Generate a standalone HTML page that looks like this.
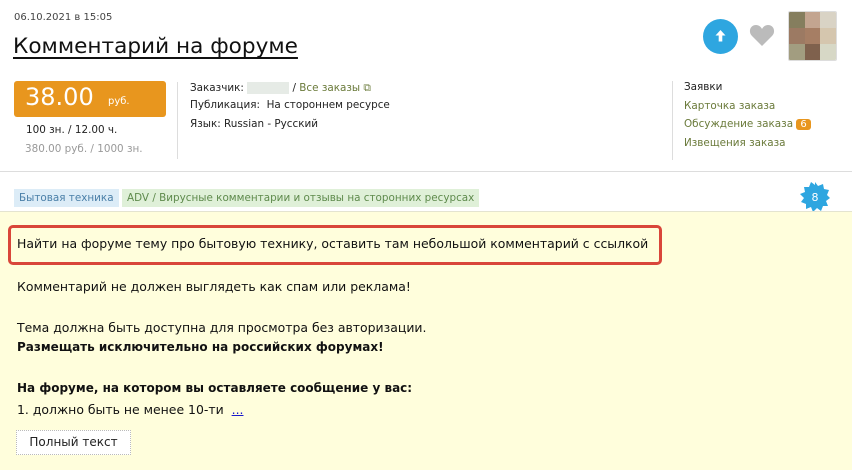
<!DOCTYPE html>
<html><head><meta charset="utf-8"><style>
*{margin:0;padding:0;box-sizing:border-box}
body{width:852px;height:470px;overflow:hidden;background:#fff;font-family:"DejaVu Sans","Liberation Sans",sans-serif;color:#222;position:relative}
.a{position:absolute;white-space:nowrap}
.s{font-size:10.4px}
.g{color:#6a7a3a}
.t{font-size:12.45px;color:#111}
</style></head><body>
<div class="a" style="left:14px;top:12px;color:#444;font-size:10px">06.10.2021 в 15:05</div>
<div class="a" style="left:13px;top:34px;font-size:21.6px;color:#111;text-decoration:underline;text-underline-offset:4px;text-decoration-thickness:2px">Комментарий на форуме</div>
<div class="a" style="left:14px;top:81px;width:152px;height:36px;background:#e8961e;border-radius:3px;color:#fff"><span style="position:absolute;left:11px;top:2px;font-size:24px">38.00</span><span style="position:absolute;left:94px;top:15px;font-size:10px">руб.</span></div>
<div class="a s" style="left:26px;top:124px">100 зн. / 12.00 ч.</div>
<div class="a s" style="left:25px;top:143px;color:#999">380.00 руб. / 1000 зн.</div>
<div class="a" style="left:177px;top:82px;width:1px;height:77px;background:#ddd"></div>
<div class="a s" style="left:190px;top:82px">Заказчик: <span style="display:inline-block;width:42px;height:12px;background:#e6ebe6;vertical-align:middle"></span> / <span class="g">Все заказы ⧉</span></div>
<div class="a s" style="left:190px;top:99px">Публикация:&nbsp; На стороннем ресурсе</div>
<div class="a s" style="left:190px;top:118px">Язык: Russian - Русский</div>
<div class="a" style="left:703px;top:19px;width:35px;height:35px;border-radius:50%;background:#2ea6e0"><svg width="35" height="35" viewBox="0 0 35 35"><path d="M17.5 11l-5 5.5h3.2v6h3.6v-6h3.2z" fill="#fff"/></svg></div>
<svg class="a" style="left:749px;top:23px" width="26" height="24" viewBox="0 0 26 24"><path d="M13 23L3 13C-1 9 1 2 7 2c3 0 5 2 6 4 1-2 3-4 6-4 6 0 8 7 4 11z" fill="#bbb"/></svg>
<div class="a" style="left:788px;top:11px;width:49px;height:50px;border:1px solid #ddd;display:grid;grid-template-columns:repeat(3,1fr);border-radius:2px;overflow:hidden">
<i style="background:#857e5e"></i><i style="background:#c3a590"></i><i style="background:#d9d3c5"></i>
<i style="background:#9c7a63"></i><i style="background:#a67e64"></i><i style="background:#d5c6ae"></i>
<i style="background:#a29d80"></i><i style="background:#7f614d"></i><i style="background:#d7d8c6"></i></div>
<div class="a" style="left:672px;top:81px;width:1px;height:79px;background:#ddd"></div>
<div class="a s" style="left:684px;top:81px">Заявки</div>
<div class="a s g" style="left:684px;top:100px">Карточка заказа</div>
<div class="a s g" style="left:684px;top:118px">Обсуждение заказа <span style="background:#e8961e;color:#fff;border-radius:3px;padding:0 4px;font-size:10px">6</span></div>
<div class="a s g" style="left:684px;top:137px">Извещения заказа</div>
<div class="a" style="left:0;top:171px;width:852px;height:1px;background:#ddd"></div>
<div class="a s" style="left:14px;top:189px;height:18px;line-height:18px;padding:0 5px;background:#dcecf7;color:#4a7fa8">Бытовая техника</div>
<div class="a s" style="left:122px;top:189px;height:18px;line-height:18px;padding:0 5px;background:#dff0d8;color:#5e8a4c">ADV / Вирусные комментарии и отзывы на сторонних ресурсах</div>
<svg class="a" style="left:799px;top:181px" width="32" height="32" viewBox="0 0 32 32"><polygon fill="#2ea6e0" points="16,1 19,5 24,3 25,8 30,9 28,14 31,17 27,20 29,25 24,25 22,30 18,27 14,31 12,26 7,28 7,23 2,21 5,17 1,13 6,11 5,6 10,6 12,1 16,4"/><text x="16" y="20" font-size="11" fill="#fff" text-anchor="middle" font-family="DejaVu Sans">8</text></svg>
<div class="a" style="left:0;top:211px;width:852px;height:259px;background:#fffedc;border-top:1px solid #e4e4d0"></div>
<div class="a" style="left:8px;top:225px;width:654px;height:40px;border:3px solid #d9463a;border-radius:5px"></div>
<div class="a t" style="left:17px;top:236px">Найти на форуме тему про бытовую технику, оставить там небольшой комментарий с ссылкой</div>
<div class="a t" style="left:17px;top:279px">Комментарий не должен выглядеть как спам или реклама!</div>
<div class="a t" style="left:17px;top:320px">Тема должна быть доступна для просмотра без авторизации.</div>
<div class="a t" style="left:17px;top:340px;font-weight:bold;font-size:12px">Размещать исключительно на российских форумах!</div>
<div class="a t" style="left:17px;top:381px;font-weight:bold;font-size:12px">На форуме, на котором вы оставляете сообщение у вас:</div>
<div class="a t" style="left:17px;top:402px">1. должно быть не менее 10-ти &nbsp;<span style="color:#1a1acc;text-decoration:underline">...</span></div>
<div class="a" style="left:16px;top:430px;width:115px;height:25px;border:1px dotted #bbb;background:#fff;font-size:12px;line-height:23px;text-align:center;color:#222">Полный текст</div>
</body></html>
